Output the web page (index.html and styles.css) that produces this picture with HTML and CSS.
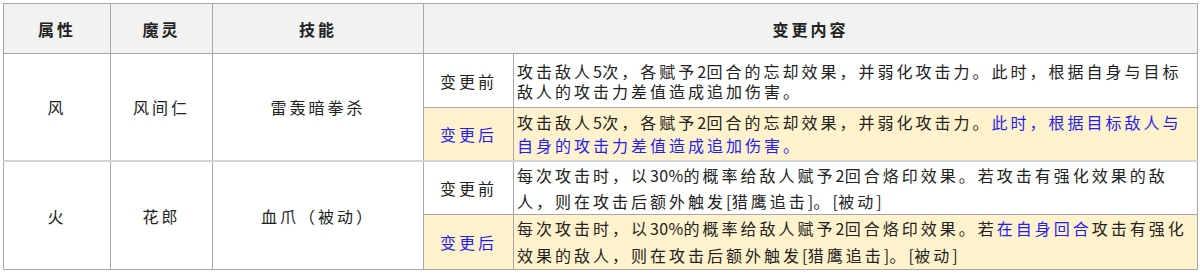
FILE: index.html
```html
<!DOCTYPE html>
<html lang="zh-CN">
<head>
<meta charset="utf-8">
<title>技能变更</title>
<link rel="stylesheet" href="styles.css">
</head>
<body>
<table class="changes">
  <colgroup>
    <col class="c-attr">
    <col class="c-spirit">
    <col class="c-skill">
    <col class="c-tag">
    <col class="c-text">
  </colgroup>
  <thead>
    <tr class="head-row">
      <th>属性</th>
      <th>魔灵</th>
      <th>技能</th>
      <th colspan="2">变更内容</th>
    </tr>
  </thead>
  <tbody>
    <tr class="r1a">
      <td rowspan="2" class="center">风</td>
      <td rowspan="2" class="center">风间仁</td>
      <td rowspan="2" class="center">雷轰暗拳杀</td>
      <td class="tag">变更前</td>
      <td class="text">攻击敌人<span class="lat">5</span>次，各赋予<span class="lat">2</span>回合的忘却效果，并弱化攻击力。此时，根据自身与目标<br>敌人的攻击力差值造成追加伤害。</td>
    </tr>
    <tr class="r1b after">
      <td class="tag blue">变更后</td>
      <td class="text">攻击敌人<span class="lat">5</span>次，各赋予<span class="lat">2</span>回合的忘却效果，并弱化攻击力。<span class="blue">此时，根据目标敌人与<br>自身的攻击力差值造成追加伤害。</span></td>
    </tr>
    <tr class="r2a group-start">
      <td rowspan="2" class="center">火</td>
      <td rowspan="2" class="center">花郎</td>
      <td rowspan="2" class="center">血爪（被动）</td>
      <td class="tag">变更前</td>
      <td class="text">每次攻击时，以<span class="lat">30%</span>的概率给敌人赋予<span class="lat">2</span>回合烙印效果。若攻击有强化效果的敌<br>人，则在攻击后额外触发<span class="lat">[</span>猎鹰追击<span class="lat">]</span>。<span class="lat">[</span>被动<span class="lat">]</span></td>
    </tr>
    <tr class="r2b after">
      <td class="tag blue">变更后</td>
      <td class="text">每次攻击时，以<span class="lat">30%</span>的概率给敌人赋予<span class="lat">2</span>回合烙印效果。若<span class="blue">在自身回合</span>攻击有强化<br>效果的敌人，则在攻击后额外触发<span class="lat">[</span>猎鹰追击<span class="lat">]</span>。<span class="lat">[</span>被动<span class="lat">]</span></td>
    </tr>
  </tbody>
</table>
</body>
</html>
```

FILE: styles.css
```css
html, body {
  margin: 0;
  padding: 0;
  background: #ffffff;
}

body {
  padding: 3px;
  font-family: "Noto Sans CJK SC", "Noto Sans", sans-serif;
  font-size: 16px;
  color: #222222;
}

.changes {
  border-collapse: collapse;
  table-layout: fixed;
  width: 1194px;
  letter-spacing: 3px;
}

.c-attr { width: 107px; }
.c-spirit { width: 102px; }
.c-skill { width: 211px; }
.c-tag { width: 90px; }
.c-text { width: 684px; }

.changes th,
.changes td {
  border: 1px solid #a7a7a7;
  padding: 0;
}

.changes th {
  background: #f2f2f2;
  font-weight: bold;
  text-align: center;
  height: 49px;
  line-height: 20px;
}

.center {
  text-align: center;
  vertical-align: middle;
}

.tag {
  text-align: center;
  vertical-align: middle;
}

.text {
  text-align: left;
  white-space: nowrap;
  padding-left: 3px !important;
  vertical-align: middle;
}

.lat {
  letter-spacing: 0.3px;
}

.after td.tag,
.after td.text {
  background: #fff2cc;
}

.blue {
  color: #1f1ff5;
}

.r1a td.text {
  line-height: 20px;
  height: 53px;
}

.r1b td.text {
  line-height: 23px;
  height: 52px;
}

.group-start td {
  border-top: 2px solid #d4d4d4;
}

.r2a td.text {
  line-height: 26px;
  height: 52px;
}

.r2b td.text {
  line-height: 27px;
  height: 54px;
}
```
